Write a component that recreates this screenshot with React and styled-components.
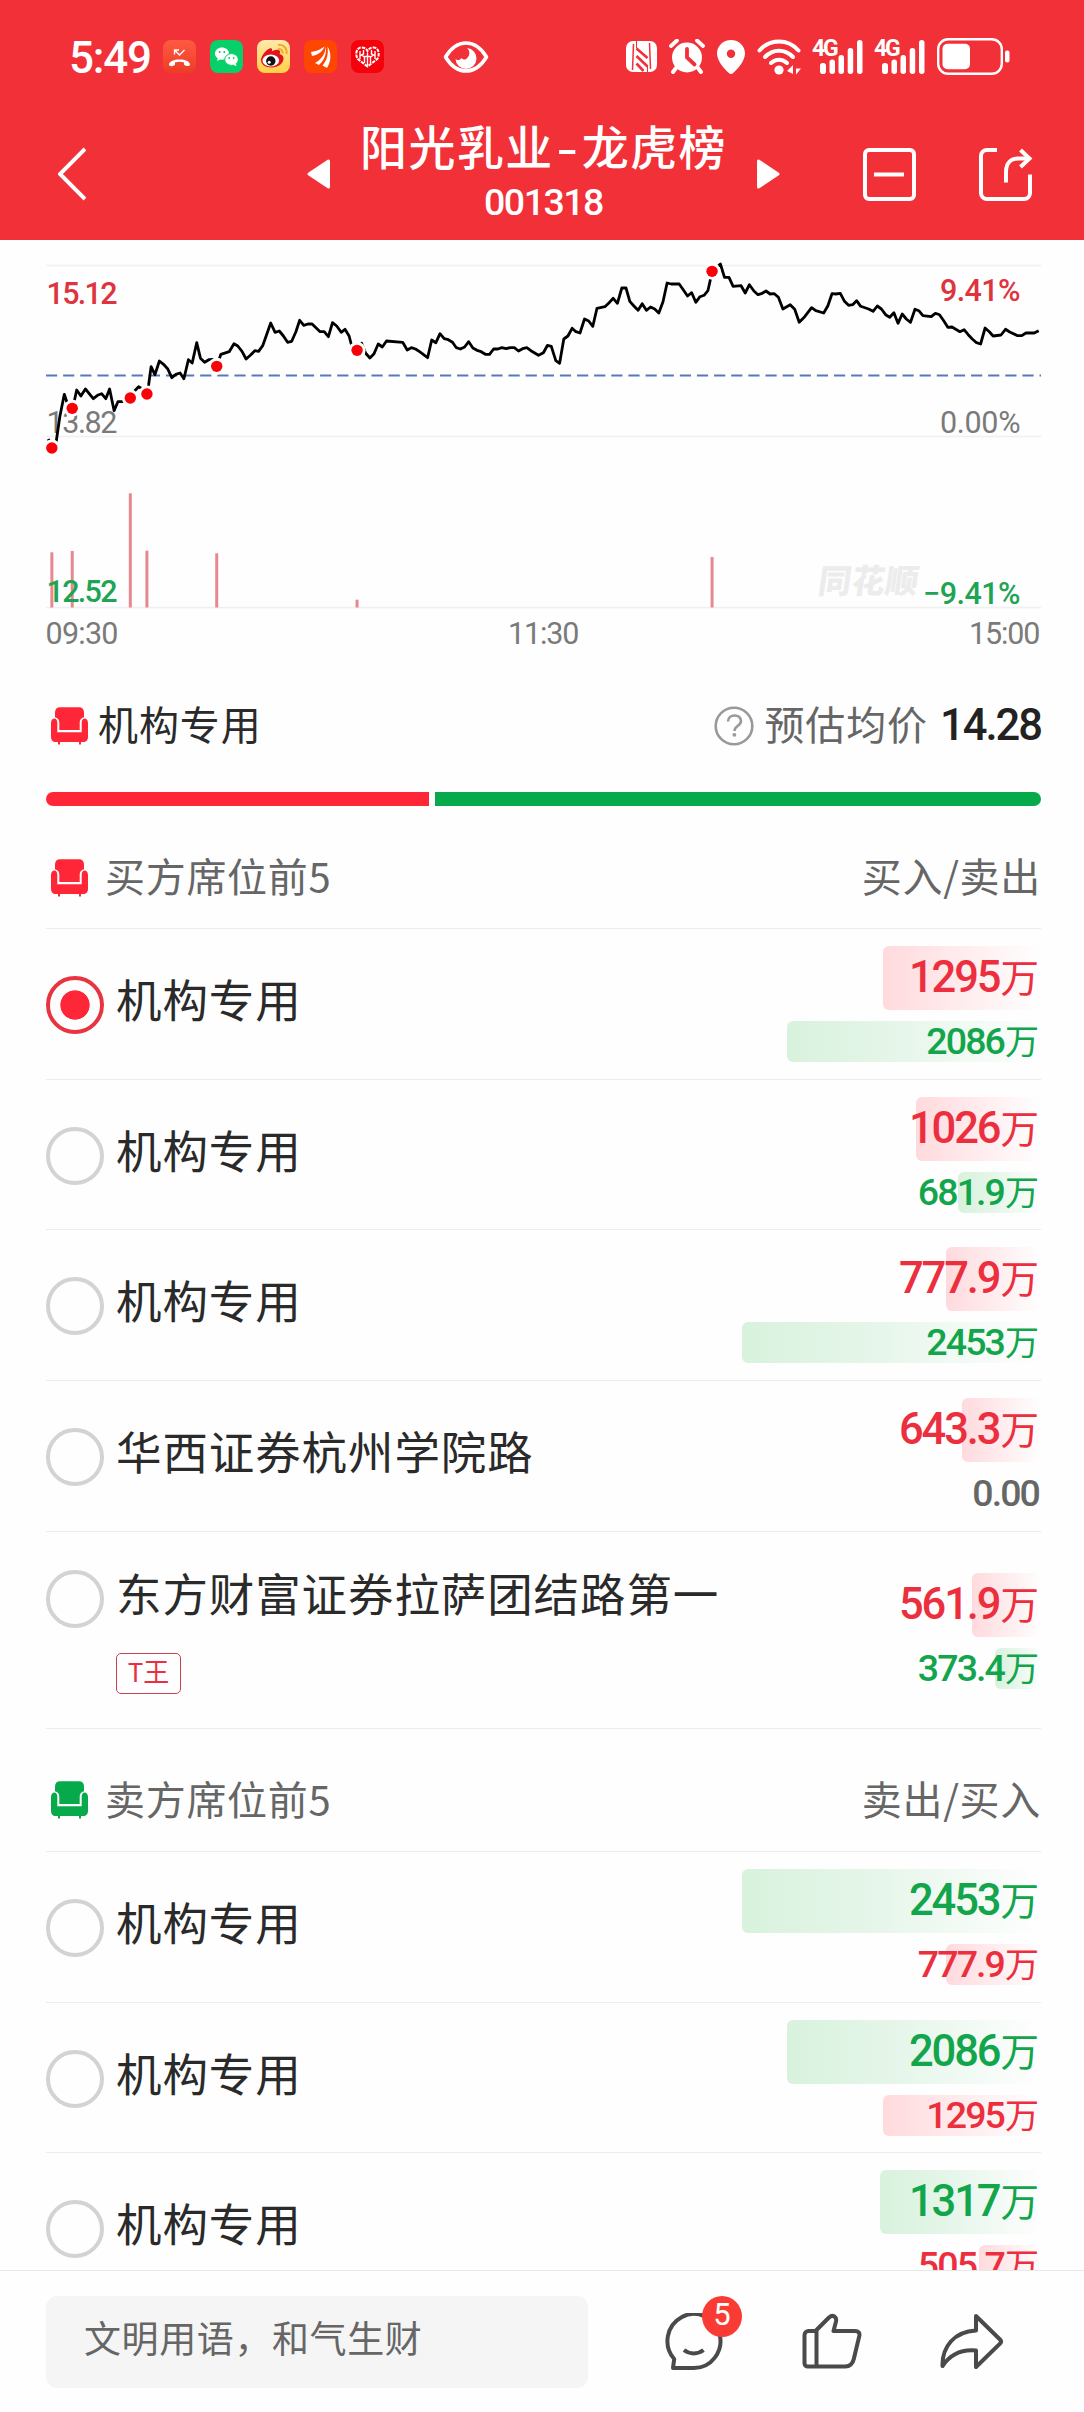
import React, { useState } from 'react';
import styled, { createGlobalStyle, css } from 'styled-components';

const palette = {
  header: '#f23038',
  red: '#ff2638',
  redText: '#ec2f3e',
  green: '#07aa4b',
  greenText: '#12a54c',
  ink: '#2a2a2a',
  gray: '#666666',
  lightGray: '#999999',
  line: '#ececec',
};

const CJK = `'Noto Sans CJK SC', sans-serif`;
const NUM = `Roboto, 'Noto Sans CJK SC', sans-serif`;

// [x, y] in chart units, the two sessions share the same width
const SESSION_WIDTH = 1568;
const MORNING = [
  [140, 597], [150, 625], [163, 603], [173, 530], [186, 463], [198, 500], [209, 505], [216, 478], [222, 450], [234, 468],
  [247, 447], [270, 476], [282, 466], [294, 461], [306, 476], [317, 447], [330, 512], [341, 485], [353, 485], [377, 473],
  [390, 452], [401, 440], [413, 448], [425, 461], [430, 435], [437, 380], [448, 404], [461, 363], [473, 373], [485, 386],
  [497, 413], [509, 403], [521, 399], [532, 416], [545, 359], [556, 369], [569, 308], [580, 355], [592, 367], [604, 359],
  [616, 358], [627, 379], [639, 343], [663, 335], [677, 311], [688, 318], [700, 334], [712, 357], [725, 345], [737, 332],
  [748, 334], [760, 317], [771, 285], [783, 249], [796, 277], [808, 273], [820, 288], [832, 307], [844, 304], [856, 275],
  [867, 241], [879, 256], [891, 252], [903, 252], [926, 275], [938, 275], [950, 290], [962, 248], [974, 258], [987, 277],
  [998, 268], [1010, 288], [1016, 312], [1033, 331], [1046, 310], [1058, 340], [1070, 354], [1082, 341], [1094, 312],
  [1106, 321], [1118, 303], [1165, 307], [1178, 330], [1190, 323], [1202, 327], [1214, 335], [1237, 353], [1249, 300],
  [1261, 308], [1273, 281], [1285, 296], [1297, 299], [1309, 307], [1320, 323], [1332, 327], [1344, 321], [1356, 305],
  [1368, 324], [1380, 331], [1392, 335], [1404, 343], [1416, 343], [1428, 327], [1440, 327], [1452, 323], [1464, 326],
  [1476, 323], [1488, 323], [1500, 333], [1512, 326], [1524, 323], [1536, 332], [1558, 346],
];
const AFTERNOON = [
  [4, 338], [16, 316], [27, 319], [40, 362], [51, 370], [63, 297], [75, 288], [87, 265], [98, 275], [110, 279], [123, 237],
  [135, 243], [147, 259], [159, 205], [182, 200], [194, 188], [206, 175], [218, 190], [231, 144], [243, 144], [254, 184],
  [266, 198], [278, 211], [290, 191], [302, 211], [314, 201], [326, 207], [338, 219], [350, 185], [362, 129], [374, 132],
  [397, 132], [409, 150], [421, 168], [433, 158], [445, 187], [457, 170], [469, 166], [480, 152], [487, 120], [492, 94],
  [516, 72], [528, 112], [541, 112], [553, 139], [576, 137], [588, 159], [600, 134], [613, 153], [625, 164], [637, 160],
  [648, 153], [660, 162], [672, 161], [684, 172], [697, 207], [718, 194], [731, 208], [744, 247], [760, 230], [780, 203],
  [792, 212], [815, 219], [827, 197], [839, 161], [850, 162], [863, 160], [875, 184], [887, 196], [899, 194], [910, 182],
  [922, 199], [945, 207], [958, 214], [970, 198], [982, 207], [994, 224], [1006, 232], [1018, 218], [1030, 250],
  [1042, 222], [1054, 237], [1066, 247], [1079, 208], [1090, 212], [1102, 227], [1126, 230], [1138, 220], [1150, 224],
  [1162, 242], [1174, 262], [1186, 261], [1209, 275], [1221, 269], [1233, 284], [1245, 297], [1257, 308], [1269, 312],
  [1282, 264], [1294, 275], [1305, 288], [1328, 285], [1341, 268], [1353, 276], [1376, 287], [1388, 287], [1400, 279],
  [1424, 279], [1437, 272],
];
const toX = x => x / 2.893;
const toY = y => y / 3;
const PRICE_LINE = [...MORNING, ...AFTERNOON.map(([x, y]) => [x + SESSION_WIDTH, y])]
  .map(([x, y]) => `${toX(x).toFixed(1)},${toY(y).toFixed(1)}`)
  .join(' ');

// x, dot y, top of volume bar
const MARKS = [
  [150, 624, 937],
  [209, 505, 933],
  [377, 474, 760],
  [425, 462, 932],
  [627, 379, 940],
  [1033, 331, 1079],
  [2060, 94, 951],
];

const BUY_SEATS = [
  { name: '机构专用', main: ['1295', 158], sub: ['2086', 254] },
  { name: '机构专用', main: ['1026', 125], sub: ['681.9', 83] },
  { name: '机构专用', main: ['777.9', 95], sub: ['2453', 299] },
  { name: '华西证券杭州学院路', main: ['643.3', 79], sub: ['0.00', 0] },
  { name: '东方财富证券拉萨团结路第一', tag: 'T王', main: ['561.9', 69], sub: ['373.4', 46] },
];
const SELL_SEATS = [
  { name: '机构专用', main: ['2453', 299], sub: ['777.9', 95] },
  { name: '机构专用', main: ['2086', 254], sub: ['1295', 158] },
  { name: '机构专用', main: ['1317', 161], sub: ['505.7', 62] },
];

function StatusBar() {
  return (
    <StatusStyled>
      <ClockStyled>5:49</ClockStyled>
      <AppIconRow>
        <svg width="33" height="33" viewBox="0 0 33 33">
          <defs>
            <linearGradient id="call" x1="0" y1="0" x2="0" y2="1">
              <stop offset="0" stopColor="#ff5a43" />
              <stop offset="1" stopColor="#ee3c26" />
            </linearGradient>
          </defs>
          <rect width="33" height="33" rx="8" fill="url(#call)" />
          <path d="M6 25c-.8-7 21-7.600 21-.3 0 1.800-6 1.600-6-.4v-1.700c-3-1-6-1-9 0v1.700c0 2-5.500 2.600-6 .7z" fill="#fff" />
          <path d="M11.500 14.500v-4.500h4.500M12 10.500l4.500 4.500 5-5" fill="none" stroke="#fff" strokeWidth="1.300" />
        </svg>
        <svg width="33" height="33" viewBox="0 0 33 33">
          <rect width="33" height="33" rx="8" fill="#07cf69" />
          <path d="M12 7.500c-4 0-7 2.700-7 6 0 2 1 3.700 2.700 4.800L7 21l3-1.500 2 .3c4 0 7-2.700 7-6.200s-3-6.100-7-6.100z" fill="#fff" />
          <ellipse cx="21.500" cy="19.500" rx="6.800" ry="5.900" fill="#fff" stroke="#07cf69" />
          <path d="M23 24.500l3.500 1.700-.6-3z" fill="#fff" />
          <g fill="#07cf69">
            <circle cx="9.700" cy="12" r="1" />
            <circle cx="14.300" cy="12" r="1" />
            <circle cx="19.300" cy="18" r=".9" />
            <circle cx="23.700" cy="18" r=".9" />
          </g>
        </svg>
        <svg width="33" height="33" viewBox="0 0 33 33">
          <defs>
            <linearGradient id="weibo" x1="0" y1="0" x2="0" y2="1">
              <stop offset="0" stopColor="#ffe9ad" />
              <stop offset="1" stopColor="#ffd044" />
            </linearGradient>
          </defs>
          <rect width="33" height="33" rx="8" fill="url(#weibo)" />
          <path d="M4 20c0-4 5-10 8.500-11.500 3-1 3 1.500 2.300 3 2-1.500 6-2.500 7.700-1 1.200 1.100.5 2.700 0 3.500 3 .8 4 2.500 4 4.500 0 5-5.500 9-12 9S4 24.500 4 20z" fill="#e2131d" />
          <ellipse cx="13.800" cy="20.500" rx="8.300" ry="6" fill="#fff" />
          <circle cx="13.800" cy="21" r="4.700" fill="#111" />
          <circle cx="12.200" cy="22.300" r="1.500" fill="#fff" />
          <path d="M21 5c6-1 9.500 4 8.500 9M21 9c3.500-.5 5 2 4.500 4.500" fill="none" stroke="#efac20" strokeWidth="2" />
        </svg>
        <svg width="33" height="33" viewBox="0 0 33 33">
          <rect width="33" height="33" rx="8" fill="#fe4600" />
          <path d="M7 12c5-.5 9.500-2.500 13.500-5.500-2 5-6 8.500-12.500 9.500z" fill="#fff" />
          <path d="M21.500 6.500c0 7-3.500 12.500-10.500 16.500l4 2C20.500 20 23 13.500 21.500 6.500z" fill="#fff" />
          <path d="M23.500 6.500c1 8-.5 13.500-5 19l4.500 2.500C27.500 20.500 27.500 13 23.500 6.500z" fill="#fff" />
        </svg>
        <svg width="33" height="33" viewBox="0 0 33 33">
          <rect width="33" height="33" rx="8" fill="#f5000b" />
          <path d="M16.500 26.500L6.800 19C4 15 5 7.500 10.500 7.500c3 0 5 1.500 6 3.500 1-2 3-3.500 6-3.500 5.500 0 6.500 7.500 3.700 11.500z" fill="none" stroke="#fff" strokeWidth="2" strokeDasharray="3.500 1" />
          <path d="M9 11v8M12.500 10v4l-2 1 3 2v6M16.500 13v13M20.500 10v4l2 1-3 2v6M24 11v8M13.500 16.500h6" fill="none" stroke="#fff" strokeWidth="1.400" />
        </svg>
      </AppIconRow>
      <EyeBox>
        <svg width="46" height="32" viewBox="0 0 46 32">
          <path d="M2.500 16C8 7 15 2 23 2s15 5 20.500 14C38 25 31 30 23 30S8 25 2.500 16z" fill="none" stroke="#fff" strokeWidth="3.600" strokeLinejoin="round" />
          <path d="M24 7a10.500 10.500 0 1 1-11.500 11c1 1 2.500 1.500 4 .8 1-.6 1.500-1.300 2-1.900 1 1.500 3 2 4.700 1 3.800-2.400 4.300-8 .8-10.900z" fill="#fff" />
        </svg>
      </EyeBox>
      <SystemRow>
        <svg width="31" height="33" viewBox="0 0 31 33">
          <rect y="1" width="31" height="31" rx="7" fill="#fff" />
          <path d="M7.500 4l-1 26M23.500 3l1 26" stroke={palette.header} strokeWidth="1.500" />
          <path d="M10.500 8.500L21.500 18M10.500 16l11 10.500M10.500 23.500l7 7.500" stroke={palette.header} strokeWidth="2.600" />
          <path d="M10.500 1v7.500M21.500 26v6" stroke={palette.header} strokeWidth="1" />
        </svg>
        <svg width="36" height="35" viewBox="0 0 36 35">
          <circle cx="18" cy="18.500" r="15" fill="#fff" />
          <path d="M2 7l6-5.500M34 7l-6-5.500" stroke="#fff" strokeWidth="3.800" strokeLinecap="round" />
          <path d="M7 29l-3 4M29 29l3 4" stroke="#fff" strokeWidth="4" strokeLinecap="round" />
          <path d="M18 10v8.500l7.500 7" fill="none" stroke={palette.header} strokeWidth="3.800" strokeLinecap="round" />
        </svg>
        <svg width="28" height="34" viewBox="0 0 28 34">
          <path fillRule="evenodd" d="M14 0c8 0 14 6 14 13.500C28 21 20 30 15.800 33.300c-1.300 1-2.300 1-3.600 0C8 30 0 21 0 13.500 0 6 6 0 14 0zm0 9.500a4.200 4.200 0 1 0 0 8.400 4.200 4.200 0 0 0 0-8.400z" fill="#fff" />
        </svg>
        <svg width="44" height="36" viewBox="0 0 44 36">
          <g fill="none" stroke="#fff" strokeWidth="4" strokeLinecap="round">
            <path d="M2.500 11.500C13-.5 31-.5 41.500 11.500" />
            <path d="M8 18c8-8.300 20-8.300 28 0" />
            <path d="M14 24c4.500-4.500 11.500-4.500 16 0" />
          </g>
          <circle cx="22" cy="31" r="4.600" fill="#fff" />
          <path d="M30 32l6-6v9M30 32h6M39 26.500v9l5-6h-5" fill="#fff" />
        </svg>
        {[0, 1].map(k => (
          <SignalBox key={k}>
            <NetworkStyled>4G</NetworkStyled>
            <svg width="50" height="36" viewBox="0 0 50 36">
              <g fill="#fff">
                <rect x="7" y="24" width="6" height="11" rx="2.800" />
                <rect x="16.500" y="20.500" width="5.500" height="14.500" rx="2.700" />
                <rect x="25.500" y="16" width="5.500" height="19" rx="2.700" />
                <rect x="34.700" y="9" width="5.500" height="26" rx="2.700" />
                <rect x="44" y="1" width="5.500" height="34" rx="2.700" />
              </g>
            </svg>
          </SignalBox>
        ))}
        <svg width="73" height="37" viewBox="0 0 73 37">
          <rect x="1.200" y="1.200" width="63.600" height="34.600" rx="10" fill="none" stroke="#fff" strokeWidth="2.400" />
          <rect x="5.500" y="5.800" width="27.500" height="25.500" rx="5" fill="#fff" />
          <rect x="68" y="12.500" width="4.500" height="12" rx="2" fill="#fff" />
        </svg>
      </SystemRow>
    </StatusStyled>
  );
}

function NavBar() {
  return (
    <NavStyled>
      <svg width="28" height="54" viewBox="0 0 28 54">
        <path d="M27 2L2 27l25 25" fill="none" stroke="#fff" strokeWidth="4" />
      </svg>
      <NavCenter>
        <svg width="23" height="30" viewBox="0 0 23 30">
          <path d="M21.500 2v26L2 15z" fill="#fff" stroke="#fff" strokeWidth="3" strokeLinejoin="round" />
        </svg>
        <TitleBox>
          <TitleStyled>
            阳光乳业<DashStyled>-</DashStyled>龙虎榜
          </TitleStyled>
          <CodeStyled>001318</CodeStyled>
        </TitleBox>
        <svg width="23" height="30" viewBox="0 0 23 30">
          <path d="M1.500 2v26L21 15z" fill="#fff" stroke="#fff" strokeWidth="3" strokeLinejoin="round" />
        </svg>
      </NavCenter>
      <NavActions>
        <svg width="53" height="53" viewBox="0 0 53 53">
          <rect x="2" y="2" width="49" height="49" rx="4" fill="none" stroke="#fff" strokeWidth="4" />
          <path d="M11 26.500h30" stroke="#fff" strokeWidth="4" />
        </svg>
        <svg width="54" height="53" viewBox="0 0 54 53">
          <g fill="none" stroke="#fff" strokeWidth="4">
            <path d="M18 2H8a6 6 0 0 0-6 6v37a6 6 0 0 0 6 6h37a6 6 0 0 0 6-6V26.500" />
            <path d="M27 34.500V24c0-9 5-13.500 12-13.500h12" />
            <path d="M41.500 2l9 8.500-9 8.500" />
          </g>
        </svg>
      </NavActions>
    </NavStyled>
  );
}

function PriceChart() {
  return (
    <ChartStyled viewBox="0 0 1084 420">
      <path d="M46 25.500h995M46 196.500h995M46 367.500h995" stroke="#f0f0f0" strokeWidth="1.500" />
      <WatermarkStyled x="817" y="353.500" textLength="100">
        同花顺
      </WatermarkStyled>
      <ChartLabel x="46.500" y="192.500" textLength="71">13.82</ChartLabel>
      <path d="M46 135.500h995" stroke="#5a76bd" strokeWidth="1.800" strokeDasharray="11.200 5.930" />
      <polyline points={PRICE_LINE} fill="none" stroke="#000" strokeWidth="2.800" strokeLinejoin="round" />
      {MARKS.map(([x, y, top]) => (
        <g key={x}>
          <path d={`M${toX(x)} ${toY(top)}V367.500`} stroke="#e6888f" strokeWidth="3" />
          <circle cx={toX(x)} cy={toY(y)} r="8.500" fill="#fff" />
          <circle cx={toX(x)} cy={toY(y)} r="5.700" fill="#fb0007" />
        </g>
      ))}
      <ChartLabel x="46.500" y="63.700" textLength="71" $tone="#dd3440" $strong>15.12</ChartLabel>
      <ChartLabel x="46.500" y="361.500" textLength="71" $tone="#1fa453" $strong>12.52</ChartLabel>
      <ChartLabel x="940" y="60.700" textLength="80.500" $tone="#dd3440" $strong>9.41%</ChartLabel>
      <ChartLabel x="940" y="192.500" textLength="80.500">0.00%</ChartLabel>
      <ChartLabel x="923" y="363.700" textLength="97.500" $tone="#1fa453" $strong>−9.41%</ChartLabel>
      <ChartLabel x="45.500" y="403.500" textLength="73">09:30</ChartLabel>
      <ChartLabel x="508" y="403.500" textLength="71.500">11:30</ChartLabel>
      <ChartLabel x="969" y="403.500" textLength="71.500">15:00</ChartLabel>
    </ChartStyled>
  );
}

function SofaIcon({ color }) {
  return (
    <svg width="37" height="38" viewBox="0 0 37 38" fill={color}>
      <path d="M4 10.300V5.500C4 2 6 .3 9 .3h19c3 0 5 1.700 5 5.200v4.800c-3 .8-4.300 2.700-4.300 5.200V23H8.300v-7.500c0-2.500-1.300-4.400-4.300-5.200z" />
      <path d="M0 16c0-6 6.300-6 6.300-.5v9.700h24.400v-9.700c0-5.500 6.300-5.500 6.300.5v14c0 3-2 5-4.500 5H30v2.500h-2V35H9v2.500H7V35H4.500C2 35 0 33 0 30z" />
    </svg>
  );
}

function Amount({ value, width, tone, small }) {
  const isZero = value === '0.00';
  return (
    <AmountBox $small={small}>
      {width > 0 && <AmountBar $tone={tone} style={{ width }} />}
      <AmountText $small={small} $tone={isZero ? 'none' : tone}>
        {value}
        {!isZero && <UnitStyled $small={small}>万</UnitStyled>}
      </AmountText>
    </AmountBox>
  );
}

function SeatRow({ seat, side, checked, onClick }) {
  const other = side === 'buy' ? 'sell' : 'buy';
  const tall = !!seat.tag;
  return (
    <RowStyled $tall={tall} onClick={onClick}>
      <RadioStyled $checked={checked} />
      <NameBox>
        <NameStyled>{seat.name}</NameStyled>
        {seat.tag && <TagStyled>{seat.tag}</TagStyled>}
      </NameBox>
      <AmountColumn $tall={tall}>
        <Amount value={seat.main[0]} width={seat.main[1]} tone={side} />
        <Amount value={seat.sub[0]} width={seat.sub[1]} tone={other} small />
      </AmountColumn>
    </RowStyled>
  );
}

function CommentBar() {
  return (
    <CommentStyled>
      <InputStyled>文明用语，和气生财</InputStyled>
      <ActionBox>
        <svg width="58" height="58" viewBox="0 0 58 58">
          <g fill="none" stroke="#4a4a4a" strokeWidth="4" strokeLinejoin="round">
            <path d="M29 55H8l1.200-9A26.500 27 0 1 1 29 55z" />
            <path d="M19 37c5.500 4.500 14 4.500 19.500 0" />
          </g>
        </svg>
        <BadgeStyled>5</BadgeStyled>
      </ActionBox>
      <ActionBox $left={79}>
        <svg width="60" height="58" viewBox="0 0 60 58">
          <g fill="none" stroke="#4a4a4a" strokeWidth="4" strokeLinejoin="round">
            <path d="M2.500 50.500V22a4 4 0 0 1 4-4h7L27 4.500c4-3.500 8-.5 7 4L31.500 18H53c3.500 0 5 2 4.300 5l-5.500 23c-1.200 5-4 7.500-8.500 7.500H6a3.500 3.500 0 0 1-3.500-3z" />
            <path d="M14.500 18v35" />
          </g>
        </svg>
      </ActionBox>
      <ActionBox $left={78}>
        <svg width="64" height="58" viewBox="0 0 64 58">
          <path d="M36 3l24 23.500c1.500 1.500 1.500 2.700 0 4.200L36 54V37.500C21 36 10 42 2.500 53 2 34 14 18.500 36 17.500z" fill="none" stroke="#4a4a4a" strokeWidth="4" strokeLinejoin="round" />
        </svg>
      </ActionBox>
    </CommentStyled>
  );
}

export default function App() {
  const [selected, setSelected] = useState('buy-0');
  return (
    <PageStyled>
      <GlobalStyle />
      <HeaderStyled>
        <StatusBar />
        <NavBar />
      </HeaderStyled>
      <ContentStyled>
        <PriceChart />
        <SummaryRow>
          <SummaryName>
            <SofaIcon color={palette.red} />
            <LabelStyled>机构专用</LabelStyled>
          </SummaryName>
          <SummaryPrice>
            <svg width="40" height="40" viewBox="0 0 40 40">
              <circle cx="20" cy="20" r="18.300" fill="none" stroke="#999" strokeWidth="2.600" />
              <path d="M14 15.500c0-8 13-8 13-.5 0 5-6.500 4.500-6.500 10" fill="none" stroke="#999" strokeWidth="2.600" />
              <circle cx="20.400" cy="28.800" r="1.900" fill="#999" />
            </svg>
            <LabelStyled>预估均价</LabelStyled>
            <PriceStyled>14.28</PriceStyled>
          </SummaryPrice>
        </SummaryRow>
        <RatioBar>
          <RatioPart $color={palette.red} style={{ width: 383 }} />
          <RatioPart $color={palette.green} style={{ flex: 1 }} />
        </RatioBar>
        <SectionHeader $height={123}>
          <SectionName>
            <SofaIcon color={palette.red} />
            <LabelStyled>买方席位前5</LabelStyled>
          </SectionName>
          <LabelStyled>买入/卖出</LabelStyled>
        </SectionHeader>
        {BUY_SEATS.map((seat, idx) => (
          <SeatRow
            key={idx}
            seat={seat}
            side="buy"
            checked={selected === `buy-${idx}`}
            onClick={() => setSelected(`buy-${idx}`)}
          />
        ))}
        <SectionHeader $height={123.3}>
          <SectionName>
            <SofaIcon color={palette.green} />
            <LabelStyled>卖方席位前5</LabelStyled>
          </SectionName>
          <LabelStyled>卖出/买入</LabelStyled>
        </SectionHeader>
        {SELL_SEATS.map((seat, idx) => (
          <SeatRow
            key={idx}
            seat={seat}
            side="sell"
            checked={selected === `sell-${idx}`}
            onClick={() => setSelected(`sell-${idx}`)}
          />
        ))}
      </ContentStyled>
      <CommentBar />
    </PageStyled>
  );
}

const GlobalStyle = createGlobalStyle`
  * {
    box-sizing: border-box;
  }
  body {
    margin: 0;
    background: #fefefe;
  }
  svg {
    display: block;
    flex-shrink: 0;
  }
`;

const PageStyled = styled.div`
  width: 1084px;
  height: 2412px;
  display: flex;
  flex-direction: column;
  overflow: hidden;
  background: #fefefe;
  font-family: ${CJK};
  color: ${palette.ink};
`;

const HeaderStyled = styled.div`
  height: 240px;
  flex-shrink: 0;
  background: ${palette.header};
`;

const StatusStyled = styled.div`
  height: 113px;
  padding: 0 74px 0 69px;
  display: flex;
  align-items: center;
`;

const ClockStyled = styled.div`
  width: 94px;
  font-family: ${NUM};
  font-size: 44px;
  font-weight: 500;
  letter-spacing: -1.2px;
  line-height: 44px;
  padding-top: 3px;
  color: #fff;
`;

const AppIconRow = styled.div`
  display: flex;
  gap: 14px;
`;

const EyeBox = styled.div`
  margin-left: 59px;
`;

const SystemRow = styled.div`
  margin-left: auto;
  display: flex;
  align-items: center;
  gap: 12px;
`;

const SignalBox = styled.div`
  position: relative;
`;

const NetworkStyled = styled.span`
  position: absolute;
  top: -3px;
  left: -1px;
  font-family: ${NUM};
  font-size: 23px;
  font-weight: 700;
  letter-spacing: -2.2px;
  line-height: 26px;
  color: #fff;
`;

const NavStyled = styled.div`
  height: 127px;
  padding: 0 51px 0 58px;
  display: flex;
  justify-content: space-between;
  align-items: center;
  & > * {
    margin-bottom: 5px;
  }
`;

const NavCenter = styled.div`
  display: flex;
  align-items: center;
  margin-left: 138px;
`;

const TitleBox = styled.div`
  width: 427px;
  display: flex;
  flex-direction: column;
  align-items: center;
`;

const TitleStyled = styled.div`
  font-size: 47px;
  font-weight: 500;
  letter-spacing: 1.4px;
  line-height: 52px;
  white-space: nowrap;
  color: #fff;
`;

const DashStyled = styled.span`
  display: inline-block;
  width: 28px;
  text-align: center;
  transform: scaleX(1.3);
`;

const CodeStyled = styled.div`
  padding-top: 4px;
  font-family: ${NUM};
  font-size: 37.500px;
  font-weight: 500;
  letter-spacing: -1.500px;
  line-height: 54px;
  color: #fff;
`;

const NavActions = styled.div`
  display: flex;
  gap: 63px;
`;

const ContentStyled = styled.div`
  flex: 1;
  min-height: 0;
  overflow: hidden;
  padding: 0 43px 0 46px;
`;

const ChartStyled = styled.svg`
  width: 1084px;
  height: 420px;
  margin-left: -46px;
`;

const ChartLabel = styled.text`
  font-family: ${NUM};
  font-size: 30.500px;
  font-weight: ${({ $strong }) => ($strong ? 500 : 400)};
  fill: ${({ $tone }) => $tone || '#7a7a7a'};
`;

const WatermarkStyled = styled.text`
  font-family: ${CJK};
  font-size: 33px;
  font-weight: 900;
  fill: #ececec;
  transform: skewX(-8deg);
  transform-origin: 820px 353px;
`;

// pulls the CJK glyphs up to the optical middle of the row
const LabelStyled = styled.span`
  display: block;
  margin-top: -5px;
`;

const SummaryRow = styled.div`
  height: 132px;
  padding-bottom: 1px;
  display: flex;
  justify-content: space-between;
  align-items: center;
  font-size: 40px;
  letter-spacing: 0.9px;
`;

const SummaryName = styled.div`
  padding-left: 5px;
  display: flex;
  align-items: center;
  gap: 10px;
  line-height: 50px;
`;

const SummaryPrice = styled.div`
  display: flex;
  align-items: center;
  gap: 10px;
  line-height: 50px;
  color: ${palette.gray};
`;

const PriceStyled = styled.span`
  margin-left: 2px;
  font-family: ${NUM};
  font-size: 43.500px;
  font-weight: 500;
  letter-spacing: -2px;
  color: #222;
`;

const RatioBar = styled.div`
  display: flex;
  gap: 6px;
  height: 14px;
  border-radius: 7px;
  overflow: hidden;
`;

const RatioPart = styled.div`
  background: ${({ $color }) => $color};
`;

const SectionHeader = styled.div`
  height: ${({ $height }) => $height}px;
  padding-top: 21px;
  border-bottom: 1.5px solid ${palette.line};
  display: flex;
  justify-content: space-between;
  align-items: center;
  font-size: 40px;
  letter-spacing: 0.7px;
  line-height: 50px;
  color: ${palette.gray};
`;

const SectionName = styled.div`
  padding-left: 5px;
  display: flex;
  align-items: center;
  gap: 17px;
`;

const RadioStyled = styled.div`
  width: 58px;
  height: 58px;
  border: 4px solid #d3d3d3;
  border-radius: 50%;
  flex-shrink: 0;
  ${({ $checked }) =>
    $checked &&
    css`
      border-color: #e83341;
      background: radial-gradient(circle, ${palette.red} 14.3px, transparent 15px);
    `}
`;

const RowStyled = styled.div`
  height: ${({ $tall }) => ($tall ? 197 : 150.7)}px;
  padding-top: ${({ $tall }) => ($tall ? 38 : 47)}px;
  border-bottom: 1px solid ${palette.line};
  display: flex;
  align-items: flex-start;
`;

const NameBox = styled.div`
  flex: 1;
  margin-left: 12px;
  margin-top: -6px;
`;

const NameStyled = styled.div`
  font-size: 45.500px;
  letter-spacing: 0.900px;
  line-height: 56px;
  white-space: nowrap;
`;

const TagStyled = styled.div`
  width: 65px;
  height: 41px;
  margin-top: 33px;
  border: 1.500px solid #c9414e;
  border-radius: 5px;
  font-size: 26px;
  line-height: 34px;
  text-align: center;
  color: ${palette.redText};
`;

const AmountColumn = styled.div`
  width: 300px;
  margin-top: ${({ $tall }) => ($tall ? 3 : -30)}px;
  display: flex;
  flex-direction: column;
  gap: 11px;
`;

const AmountBox = styled.div`
  height: ${({ $small }) => ($small ? 41 : 64)}px;
  display: grid;
  justify-items: end;
  align-items: center;
  & > * {
    grid-area: 1 / 1;
  }
`;

const AmountBar = styled.div`
  height: 100%;
  border-radius: 6px;
  background: ${({ $tone }) =>
    $tone === 'buy'
      ? 'linear-gradient(90deg, #ffdadd, #fefefe)'
      : 'linear-gradient(90deg, #d8f2dd, #e6f6ea 45%, #fefefe)'};
`;

const AmountText = styled.div`
  padding-right: 2px;
  font-family: ${NUM};
  font-size: ${({ $small }) => ($small ? 37.5 : 43.5)}px;
  font-weight: 500;
  letter-spacing: ${({ $small }) => ($small ? -1.9 : -2.1)}px;
  line-height: ${({ $small }) => ($small ? 41 : 64)}px;
  height: ${({ $small }) => ($small ? 41 : 64)}px;
  color: ${({ $tone }) => ($tone === 'buy' ? palette.redText : $tone === 'sell' ? palette.greenText : palette.gray)};
`;

const UnitStyled = styled.span`
  margin-left: 1px;
  font-family: ${CJK};
  font-size: ${({ $small }) => ($small ? 34 : 38.5)}px;
  font-weight: 400;
  line-height: 1;
  letter-spacing: 0;
`;

const CommentStyled = styled.div`
  height: 142px;
  flex-shrink: 0;
  padding: 25px 46px 0;
  border-top: 1.500px solid #e8e8e8;
  display: flex;
  align-items: flex-start;
  background: #fefefe;
`;

const InputStyled = styled.div`
  width: 542px;
  height: 92px;
  margin-right: 77px;
  padding-left: 38px;
  border-radius: 11px;
  background: #f5f5f5;
  font-size: 37px;
  letter-spacing: 0.6px;
  line-height: 83px;
  color: ${palette.gray};
`;

const ActionBox = styled.div`
  position: relative;
  margin-top: 17px;
  margin-left: ${({ $left = 0 }) => $left}px;
`;

const BadgeStyled = styled.div`
  position: absolute;
  top: -17px;
  left: 37px;
  width: 40px;
  height: 41px;
  border-radius: 50%;
  background: #fa3b34;
  font-family: ${NUM};
  font-size: 31px;
  line-height: 38px;
  text-align: center;
  color: #fff;
`;
